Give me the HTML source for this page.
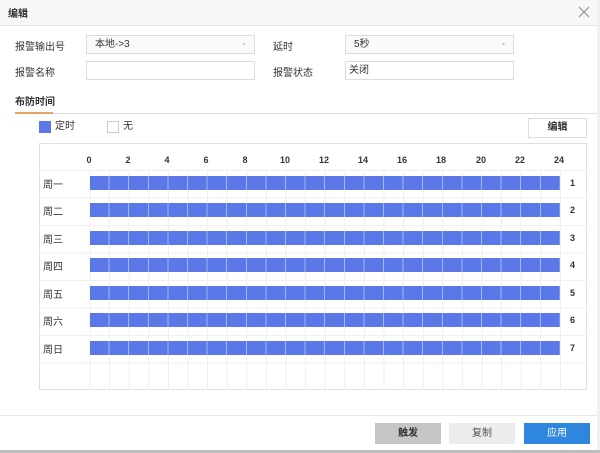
<!DOCTYPE html>
<html><head><meta charset="utf-8"><style>
*{margin:0;padding:0;box-sizing:border-box}
body{width:600px;height:453px;background:#fff;font-family:"Liberation Sans","Noto Sans CJK SC",sans-serif;font-size:10px;color:#333;position:relative;overflow:hidden;line-height:1}
.a{position:absolute}
.hdr{left:0;top:0;width:600px;height:26px;background:#f7f7f7;border-bottom:1px solid #e4e4e4}
.in{border:1px solid #dcdcdc;background:#fff;height:19px;line-height:17px;padding-left:8px}
.bar{left:90px;width:470px;height:14px;background-color:#5b78e8;background-image:repeating-linear-gradient(90deg,transparent 0,transparent 18.6px,rgba(255,255,255,.45) 18.6px,rgba(255,255,255,.45) 19.6px)}
.lbl{left:43px;font-size:10px}
.num{left:570px;font-weight:bold;font-size:9px}
.btn{top:423px;width:66px;height:21px;line-height:21px;text-align:center;font-size:10px}
</style></head><body>
<div class="a hdr"></div>
<div class="a" style="left:8px;top:10px;font-weight:bold;font-size:10px">编辑</div>
<svg class="a" style="left:578px;top:6px" width="12" height="12"><path d="M1 1L11 11M11 1L1 11" stroke="#888" stroke-width="1"/></svg>

<div class="a" style="left:15px;top:43px">报警输出号</div>
<div class="a in" style="left:86px;top:35px;width:169px;background:#fafafa">本地-&gt;3<span style="position:absolute;right:8px;color:#888">-</span></div>
<div class="a" style="left:273px;top:43px">延时</div>
<div class="a in" style="left:345px;top:35px;width:169px;background:#fafafa">5秒<span style="position:absolute;right:8px;color:#888">-</span></div>
<div class="a" style="left:15px;top:69px">报警名称</div>
<div class="a in" style="left:86px;top:61px;width:169px"></div>
<div class="a" style="left:273px;top:69px">报警状态</div>
<div class="a in" style="left:345px;top:61px;width:169px;padding-left:3px">关闭</div>

<div class="a" style="left:15px;top:98px;font-weight:bold">布防时间</div>
<div class="a" style="left:15px;top:113px;width:582px;height:1px;background:#dedede"></div>
<div class="a" style="left:15px;top:112px;width:38px;height:2px;background:#e8a463"></div>

<div class="a" style="left:39px;top:121px;width:12px;height:12px;background:#5b78e8"></div>
<div class="a" style="left:55px;top:122px">定时</div>
<div class="a" style="left:107px;top:121px;width:12px;height:12px;border:1px solid #ccc"></div>
<div class="a" style="left:123px;top:122px">无</div>
<div class="a" style="left:528px;top:118px;width:59px;height:20px;border:1px solid #ddd;text-align:center;line-height:18px;font-weight:bold">编辑</div>

<div class="a" style="left:39px;top:143px;width:548px;height:247px;border:1px solid #e0e0e0"></div>
<svg class="a" style="left:39px;top:143px" width="548" height="247">
<g stroke="#efefef" stroke-width="1">
<line x1="0" y1="27.5" x2="548" y2="27.5"/><line x1="0" y1="55" x2="548" y2="55"/><line x1="0" y1="82.5" x2="548" y2="82.5"/><line x1="0" y1="110" x2="548" y2="110"/><line x1="0" y1="137.5" x2="548" y2="137.5"/><line x1="0" y1="165" x2="548" y2="165"/><line x1="0" y1="192.5" x2="548" y2="192.5"/><line x1="0" y1="220" x2="548" y2="220"/>
<line x1="51" y1="27" x2="51" y2="247"/><line x1="70.6" y1="27" x2="70.6" y2="247"/><line x1="90.2" y1="27" x2="90.2" y2="247"/><line x1="109.8" y1="27" x2="109.8" y2="247"/><line x1="129.4" y1="27" x2="129.4" y2="247"/><line x1="149" y1="27" x2="149" y2="247"/><line x1="168.6" y1="27" x2="168.6" y2="247"/><line x1="188.2" y1="27" x2="188.2" y2="247"/><line x1="207.8" y1="27" x2="207.8" y2="247"/><line x1="227.4" y1="27" x2="227.4" y2="247"/><line x1="247" y1="27" x2="247" y2="247"/><line x1="266.6" y1="27" x2="266.6" y2="247"/><line x1="286.2" y1="27" x2="286.2" y2="247"/><line x1="305.8" y1="27" x2="305.8" y2="247"/><line x1="325.4" y1="27" x2="325.4" y2="247"/><line x1="345" y1="27" x2="345" y2="247"/><line x1="364.6" y1="27" x2="364.6" y2="247"/><line x1="384.2" y1="27" x2="384.2" y2="247"/><line x1="403.8" y1="27" x2="403.8" y2="247"/><line x1="423.4" y1="27" x2="423.4" y2="247"/><line x1="443" y1="27" x2="443" y2="247"/><line x1="462.6" y1="27" x2="462.6" y2="247"/><line x1="482.2" y1="27" x2="482.2" y2="247"/><line x1="501.8" y1="27" x2="501.8" y2="247"/><line x1="521.4" y1="27" x2="521.4" y2="247"/>
</g>
<g font-family="Liberation Sans" font-size="9" font-weight="bold" fill="#333" text-anchor="middle">
<text x="50" y="20">0</text><text x="89" y="20">2</text><text x="128" y="20">4</text><text x="167" y="20">6</text><text x="206" y="20">8</text><text x="246" y="20">10</text><text x="285" y="20">12</text><text x="324" y="20">14</text><text x="363" y="20">16</text><text x="402" y="20">18</text><text x="442" y="20">20</text><text x="481" y="20">22</text><text x="520" y="20">24</text>
</g>
</svg>

<div class="a lbl" style="top:181px">周一</div><div class="a bar" style="top:176px"></div><div class="a num" style="top:179px">1</div>
<div class="a lbl" style="top:208px">周二</div><div class="a bar" style="top:203px"></div><div class="a num" style="top:206px">2</div>
<div class="a lbl" style="top:236px">周三</div><div class="a bar" style="top:231px"></div><div class="a num" style="top:234px">3</div>
<div class="a lbl" style="top:263px">周四</div><div class="a bar" style="top:258px"></div><div class="a num" style="top:261px">4</div>
<div class="a lbl" style="top:291px">周五</div><div class="a bar" style="top:286px"></div><div class="a num" style="top:289px">5</div>
<div class="a lbl" style="top:318px">周六</div><div class="a bar" style="top:313px"></div><div class="a num" style="top:316px">6</div>
<div class="a lbl" style="top:346px">周日</div><div class="a bar" style="top:341px"></div><div class="a num" style="top:344px">7</div>

<div class="a" style="left:0;top:415px;width:600px;height:1px;background:#e8e8e8"></div>
<div class="a btn" style="left:375px;background:#c6c6c6;font-weight:bold">触发</div>
<div class="a btn" style="left:449px;background:#ececec;color:#555">复制</div>
<div class="a btn" style="left:524px;background:#2e86de;color:#fff">应用</div>
<div class="a" style="left:597px;top:0;width:3px;height:453px;background:#f0f0f0"></div>
<div class="a" style="left:0;top:450px;width:600px;height:3px;background:#bdbdbd"></div>
</body></html>
